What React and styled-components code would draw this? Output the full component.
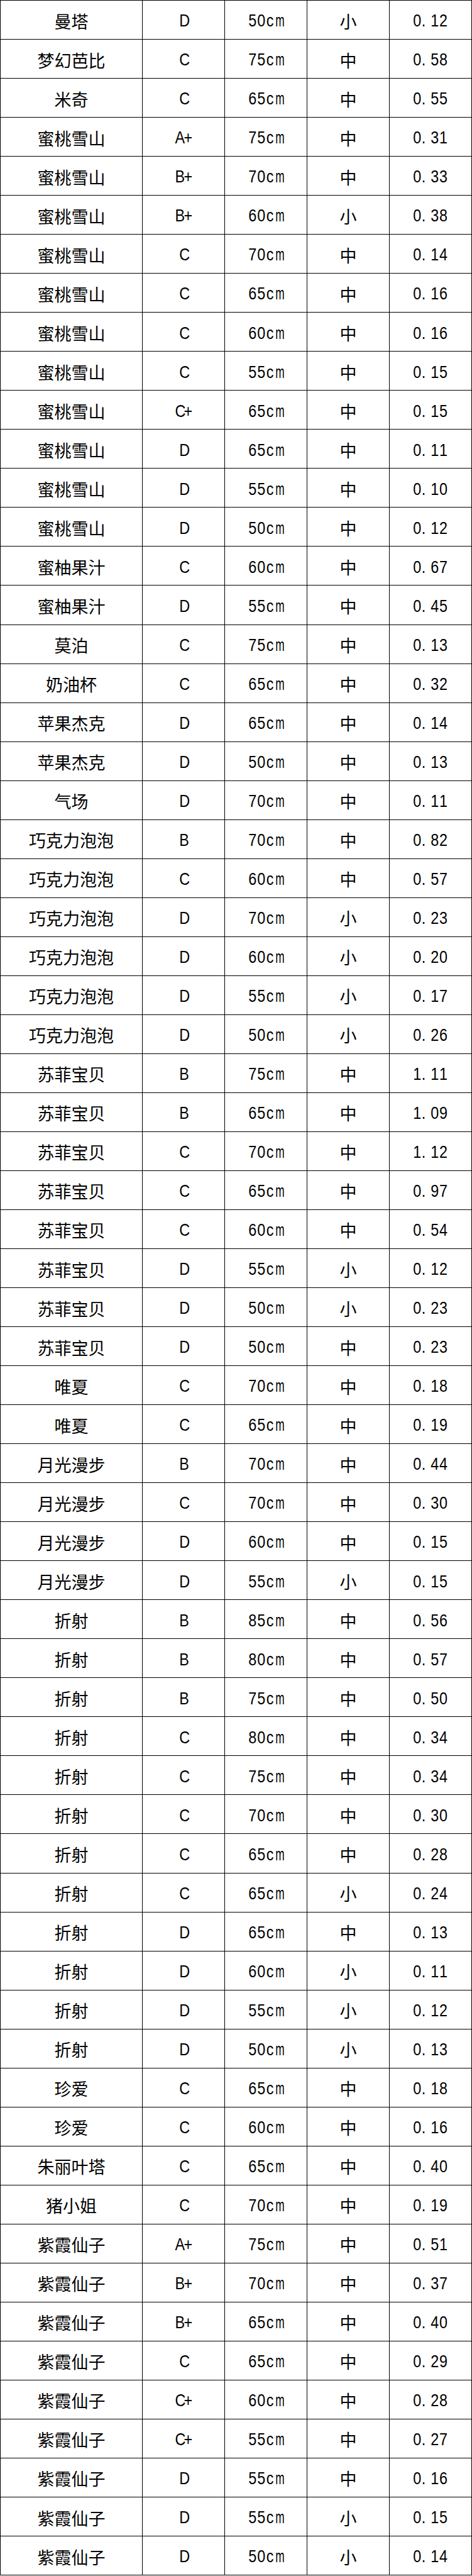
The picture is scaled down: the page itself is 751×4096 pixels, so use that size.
import React from 'react';
import styled, { createGlobalStyle } from 'styled-components';

const Global = createGlobalStyle`
  html, body { margin: 0; padding: 0; background: #ffffff; }
  body { font-family: "Noto Sans CJK SC", sans-serif; color: #000000; }
`;

const rows = [
  ['曼塔', 'D', '50cm', '小', '0.12'],
  ['梦幻芭比', 'C', '75cm', '中', '0.58'],
  ['米奇', 'C', '65cm', '中', '0.55'],
  ['蜜桃雪山', 'A+', '75cm', '中', '0.31'],
  ['蜜桃雪山', 'B+', '70cm', '中', '0.33'],
  ['蜜桃雪山', 'B+', '60cm', '小', '0.38'],
  ['蜜桃雪山', 'C', '70cm', '中', '0.14'],
  ['蜜桃雪山', 'C', '65cm', '中', '0.16'],
  ['蜜桃雪山', 'C', '60cm', '中', '0.16'],
  ['蜜桃雪山', 'C', '55cm', '中', '0.15'],
  ['蜜桃雪山', 'C+', '65cm', '中', '0.15'],
  ['蜜桃雪山', 'D', '65cm', '中', '0.11'],
  ['蜜桃雪山', 'D', '55cm', '中', '0.10'],
  ['蜜桃雪山', 'D', '50cm', '中', '0.12'],
  ['蜜柚果汁', 'C', '60cm', '中', '0.67'],
  ['蜜柚果汁', 'D', '55cm', '中', '0.45'],
  ['莫泊', 'C', '75cm', '中', '0.13'],
  ['奶油杯', 'C', '65cm', '中', '0.32'],
  ['苹果杰克', 'D', '65cm', '中', '0.14'],
  ['苹果杰克', 'D', '50cm', '中', '0.13'],
  ['气场', 'D', '70cm', '中', '0.11'],
  ['巧克力泡泡', 'B', '70cm', '中', '0.82'],
  ['巧克力泡泡', 'C', '60cm', '中', '0.57'],
  ['巧克力泡泡', 'D', '70cm', '小', '0.23'],
  ['巧克力泡泡', 'D', '60cm', '小', '0.20'],
  ['巧克力泡泡', 'D', '55cm', '小', '0.17'],
  ['巧克力泡泡', 'D', '50cm', '小', '0.26'],
  ['苏菲宝贝', 'B', '75cm', '中', '1.11'],
  ['苏菲宝贝', 'B', '65cm', '中', '1.09'],
  ['苏菲宝贝', 'C', '70cm', '中', '1.12'],
  ['苏菲宝贝', 'C', '65cm', '中', '0.97'],
  ['苏菲宝贝', 'C', '60cm', '中', '0.54'],
  ['苏菲宝贝', 'D', '55cm', '小', '0.12'],
  ['苏菲宝贝', 'D', '50cm', '小', '0.23'],
  ['苏菲宝贝', 'D', '50cm', '中', '0.23'],
  ['唯夏', 'C', '70cm', '中', '0.18'],
  ['唯夏', 'C', '65cm', '中', '0.19'],
  ['月光漫步', 'B', '70cm', '中', '0.44'],
  ['月光漫步', 'C', '70cm', '中', '0.30'],
  ['月光漫步', 'D', '60cm', '中', '0.15'],
  ['月光漫步', 'D', '55cm', '小', '0.15'],
  ['折射', 'B', '85cm', '中', '0.56'],
  ['折射', 'B', '80cm', '中', '0.57'],
  ['折射', 'B', '75cm', '中', '0.50'],
  ['折射', 'C', '80cm', '中', '0.34'],
  ['折射', 'C', '75cm', '中', '0.34'],
  ['折射', 'C', '70cm', '中', '0.30'],
  ['折射', 'C', '65cm', '中', '0.28'],
  ['折射', 'C', '65cm', '小', '0.24'],
  ['折射', 'D', '65cm', '中', '0.13'],
  ['折射', 'D', '60cm', '小', '0.11'],
  ['折射', 'D', '55cm', '小', '0.12'],
  ['折射', 'D', '50cm', '小', '0.13'],
  ['珍爱', 'C', '65cm', '中', '0.18'],
  ['珍爱', 'C', '60cm', '中', '0.16'],
  ['朱丽叶塔', 'C', '65cm', '中', '0.40'],
  ['猪小姐', 'C', '70cm', '中', '0.19'],
  ['紫霞仙子', 'A+', '75cm', '中', '0.51'],
  ['紫霞仙子', 'B+', '70cm', '中', '0.37'],
  ['紫霞仙子', 'B+', '65cm', '中', '0.40'],
  ['紫霞仙子', 'C', '65cm', '中', '0.29'],
  ['紫霞仙子', 'C+', '60cm', '中', '0.28'],
  ['紫霞仙子', 'C+', '55cm', '中', '0.27'],
  ['紫霞仙子', 'D', '55cm', '中', '0.16'],
  ['紫霞仙子', 'D', '55cm', '小', '0.15'],
  ['紫霞仙子', 'D', '50cm', '小', '0.14'],
];

const Table = styled.div`
  width: 751px;
  box-sizing: border-box;
  border-top: 1px solid #000;
  border-left: 1px solid #000;
  display: flex;
  flex-direction: column;
`;

const Row = styled.div`
  display: grid;
  grid-template-columns: 226px 131px 131px 131px 1fr;
  height: 62.04px;
`;

const Cell = styled.div`
  box-sizing: border-box;
  border-right: 1px solid #000;
  border-bottom: 1px solid #000;
  display: flex;
  align-items: center;
  justify-content: center;
  padding-top: 3px;
  overflow: hidden;
`;

const Han = styled.span`
  font-family: "Noto Sans CJK SC", sans-serif;
  font-size: 27px;
  line-height: 1;
  font-weight: 400;
  white-space: nowrap;
`;

const Half = styled.span`
  display: inline-flex;
  font-family: "Liberation Sans", Arial, sans-serif;
  font-size: 27.5px;
  line-height: 1;
  transform: scaleX(0.85);
  white-space: nowrap;
`;

const Glyph = styled.span`
  display: inline-block;
  width: 16.35px;
  text-align: ${(p) => (p.$dot ? 'left' : 'center')};
  transform: ${(p) => (p.$narrow ? 'scaleX(0.74)' : 'none')};
`;

function HalfText({ text }) {
  return (
    <Half>
      {text.split('').map((ch, i) => (
        <Glyph key={i} $dot={ch === '.'} $narrow={ch === 'm'}>
          {ch}
        </Glyph>
      ))}
    </Half>
  );
}

export default function App() {
  return (
    <>
      <Global />
      <Table>
        {rows.map((r, i) => (
          <Row key={i}>
            <Cell><Han>{r[0]}</Han></Cell>
            <Cell><HalfText text={r[1]} /></Cell>
            <Cell><HalfText text={r[2]} /></Cell>
            <Cell><Han>{r[3]}</Han></Cell>
            <Cell><HalfText text={r[4]} /></Cell>
          </Row>
        ))}
      </Table>
    </>
  );
}
